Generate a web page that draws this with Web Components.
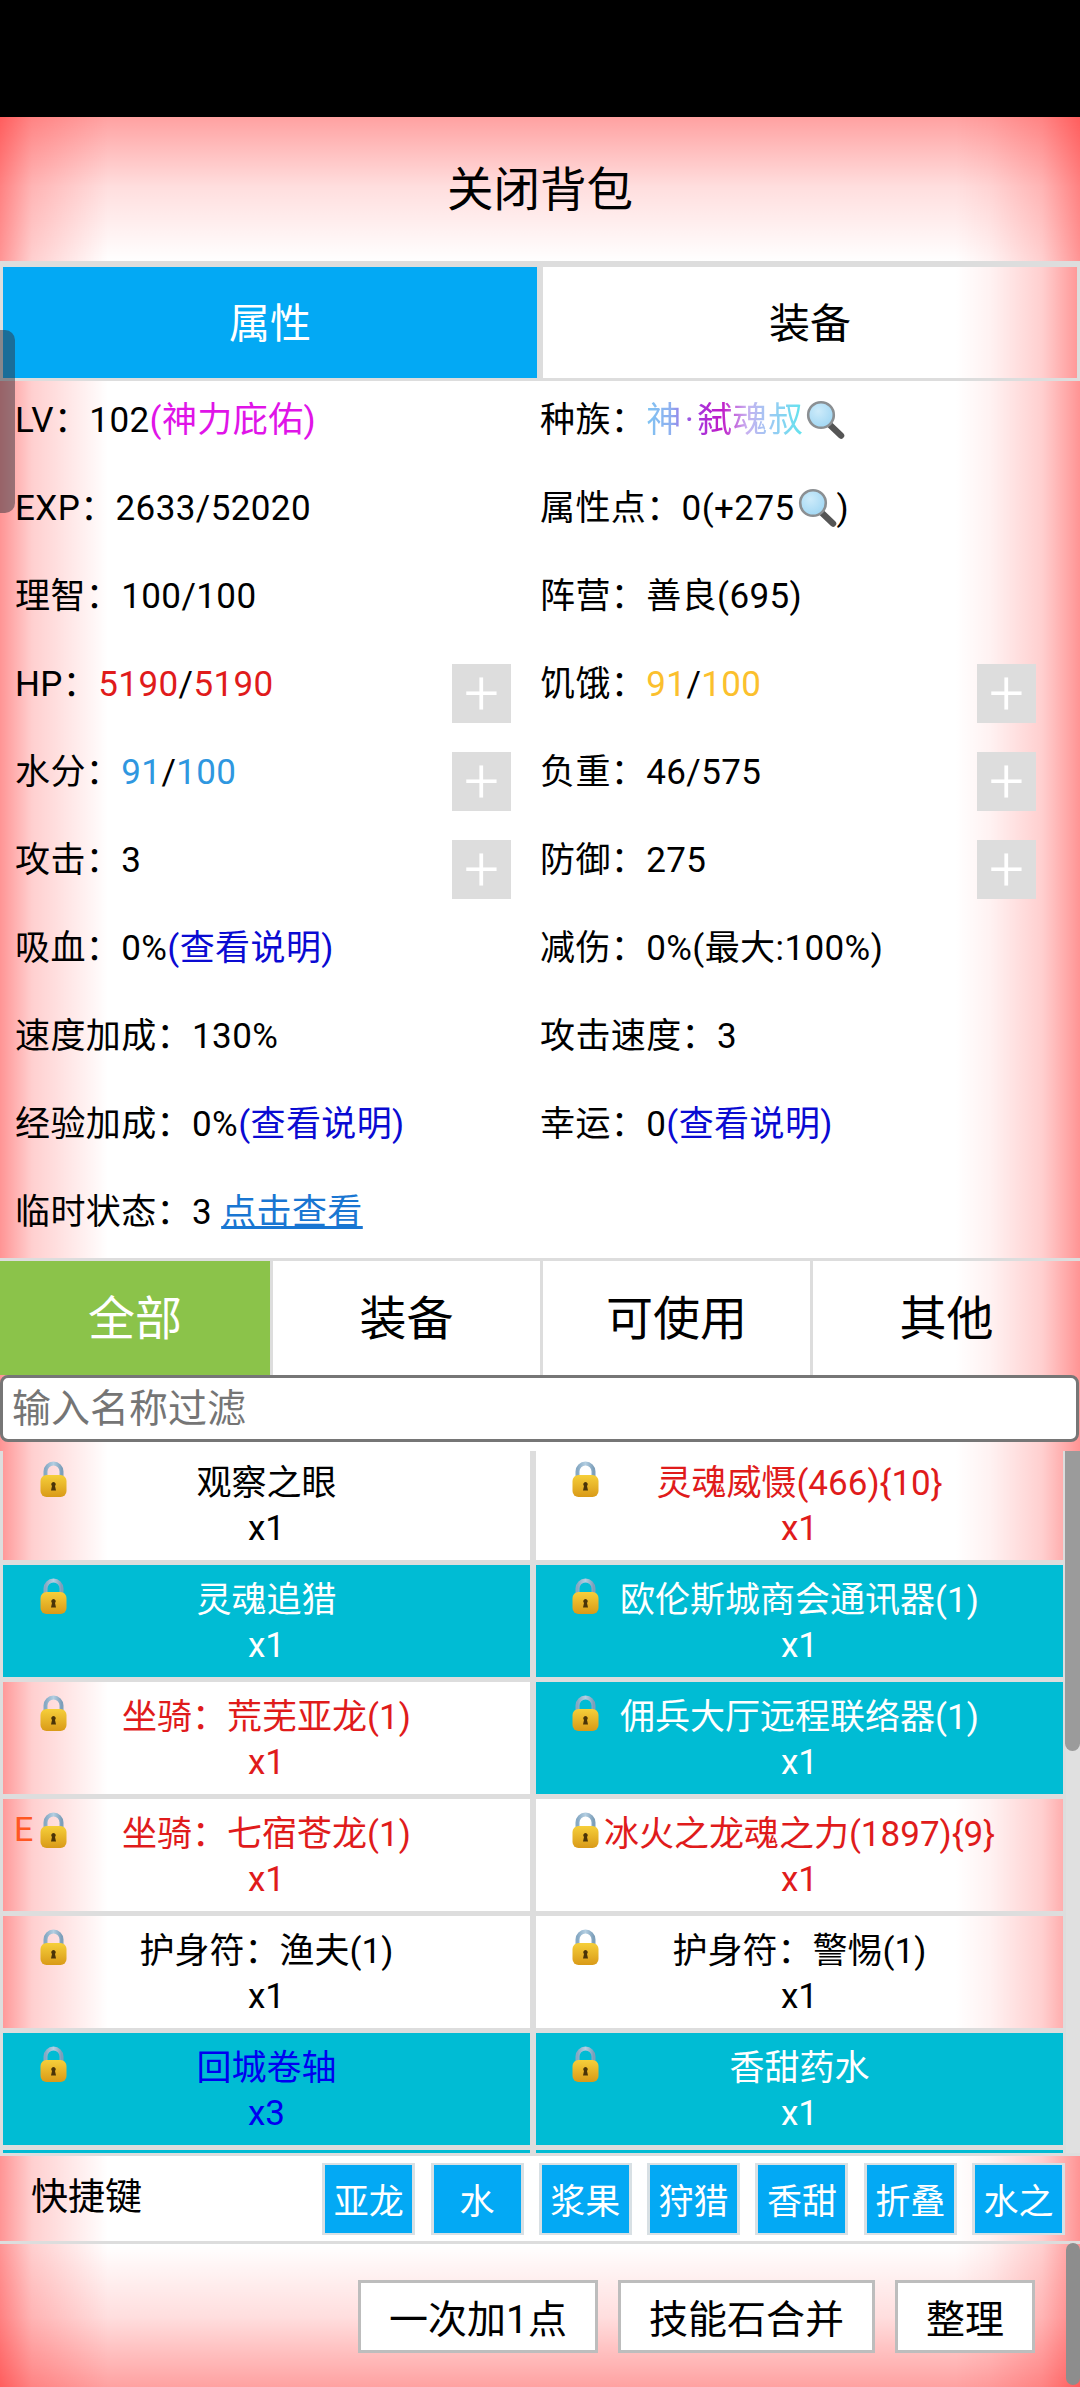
<!DOCTYPE html>
<html lang="zh-CN">
<head>
<meta charset="utf-8">
<title>背包</title>
<style>
html,body{margin:0;padding:0;background:#000}
body{width:1080px;height:2387px;overflow:hidden;font-family:Roboto,"Noto Sans CJK SC",sans-serif;color:#000}
.c{font-family:"Noto Sans CJK TC",sans-serif;line-height:0}
.mag{color:#e014e8}.red{color:#e01b1b}.sky{color:#2f97e0}.gold{color:#fbc02d}.link{color:#0a0ad2}
.ul{color:#1976d2;text-decoration:underline}
.race{background:linear-gradient(90deg,#7fc4f2 0,#8fb0f0 16%,#a040e0 30%,#c018c8 48%,#c8b0f0 64%,#a0c8f4 78%,#60e4ee 100%);-webkit-background-clip:text;background-clip:text;color:transparent}
.dot{margin:0 3px}
</style>
</head>
<body>
<x-bag>
  <x-title>关闭背包</x-title>
  <x-tabs>
    <x-tab active>属性</x-tab>
    <x-tab>装备</x-tab>
  </x-tabs>
  <x-stats>
    <x-stat>LV<span class="c">：</span>102<span class="mag">(神力庇佑)</span></x-stat>
    <x-stat>种族<span class="c">：</span><span class="race">神<span class="dot">·</span>弑魂叔</span><x-magnifier></x-magnifier></x-stat>
    <x-stat>EXP<span class="c">：</span>2633/52020</x-stat>
    <x-stat>属性点<span class="c">：</span>0(+275<x-magnifier></x-magnifier>)</x-stat>
    <x-stat>理智<span class="c">：</span>100/100</x-stat>
    <x-stat>阵营<span class="c">：</span>善良(695)</x-stat>
    <x-stat plus>HP<span class="c">：</span><span class="red">5190</span>/<span class="red">5190</span></x-stat>
    <x-stat plus>饥饿<span class="c">：</span><span class="gold">91</span>/<span class="gold">100</span></x-stat>
    <x-stat plus>水分<span class="c">：</span><span class="sky">91</span>/<span class="sky">100</span></x-stat>
    <x-stat plus>负重<span class="c">：</span>46/575</x-stat>
    <x-stat plus>攻击<span class="c">：</span>3</x-stat>
    <x-stat plus>防御<span class="c">：</span>275</x-stat>
    <x-stat>吸血<span class="c">：</span>0%<span class="link">(查看说明)</span></x-stat>
    <x-stat>减伤<span class="c">：</span>0%(最大:100%)</x-stat>
    <x-stat>速度加成<span class="c">：</span>130%</x-stat>
    <x-stat>攻击速度<span class="c">：</span>3</x-stat>
    <x-stat>经验加成<span class="c">：</span>0%<span class="link">(查看说明)</span></x-stat>
    <x-stat>幸运<span class="c">：</span>0<span class="link">(查看说明)</span></x-stat>
    <x-stat>临时状态<span class="c">：</span>3 <span class="ul">点击查看</span></x-stat>
  </x-stats>
  <x-filters>
    <x-filter active>全部</x-filter>
    <x-filter>装备</x-filter>
    <x-filter>可使用</x-filter>
    <x-filter>其他</x-filter>
  </x-filters>
  <x-search>输入名称过滤</x-search>
  <x-list>
    <x-item>观察之眼<span slot="count">x1</span></x-item>
    <x-item class="red">灵魂威慑(466){10}<span slot="count">x1</span></x-item>
    <x-item teal>灵魂追猎<span slot="count">x1</span></x-item>
    <x-item teal>欧伦斯城商会通讯器(1)<span slot="count">x1</span></x-item>
    <x-item class="red">坐骑<span class="c">：</span>荒芜亚龙(1)<span slot="count">x1</span></x-item>
    <x-item teal>佣兵大厅远程联络器(1)<span slot="count">x1</span></x-item>
    <x-item class="red" equipped>坐骑<span class="c">：</span>七宿苍龙(1)<span slot="count">x1</span></x-item>
    <x-item class="red">冰火之龙魂之力(1897){9}<span slot="count">x1</span></x-item>
    <x-item>护身符<span class="c">：</span>渔夫(1)<span slot="count">x1</span></x-item>
    <x-item>护身符<span class="c">：</span>警惕(1)<span slot="count">x1</span></x-item>
    <x-item teal style="color:#0000f0">回城卷轴<span slot="count">x3</span></x-item>
    <x-item teal>香甜药水<span slot="count">x1</span></x-item>
    <x-item teal empty></x-item>
    <x-item teal empty></x-item>
  </x-list>
  <x-quick>
    <x-key>亚龙</x-key><x-key>水</x-key><x-key>浆果</x-key><x-key>狩猎</x-key><x-key>香甜</x-key><x-key>折叠</x-key><x-key>水之</x-key>
  </x-quick>
  <x-actions>
    <x-action>一次加1点</x-action>
    <x-action>技能石合并</x-action>
    <x-action>整理</x-action>
  </x-actions>
</x-bag>
<script>
function def(name, css, html){
  customElements.define(name, class extends HTMLElement{
    constructor(){
      super();
      const r=this.attachShadow({mode:'open'});
      r.innerHTML='<style>'+css+'</style>'+html;
    }
  });
}
const LOCK='<svg viewBox="0 0 27 37" width="27" height="37" aria-hidden="true"><defs><linearGradient id="b" x1="0" y1="0" x2="0" y2="1"><stop offset="0" stop-color="#f6cf3a"/><stop offset="1" stop-color="#d99a18"/></linearGradient><linearGradient id="s" x1="0" y1="0" x2="1" y2="0"><stop offset="0" stop-color="#86a9c4"/><stop offset=".5" stop-color="#b4cfe2"/><stop offset="1" stop-color="#7d9fba"/></linearGradient></defs><path d="M5.500 19V11.500a8 8 0 0 1 16 0V19" fill="none" stroke="url(#s)" stroke-width="4"/><rect x="0.500" y="15" width="26" height="22" rx="6" fill="url(#b)"/><path d="M13.500 22a2.300 2.300 0 0 1 1.500 4l1 4.500h-5l1-4.500a2.300 2.300 0 0 1 1.500-4z" fill="#4a3408"/></svg>';
const MAG='<svg viewBox="0 0 40 40" width="40" height="40" aria-hidden="true"><defs><radialGradient id="l" cx=".4" cy=".35" r=".7"><stop offset="0" stop-color="#cdebfa"/><stop offset="1" stop-color="#9fd6f3"/></radialGradient></defs><path d="M25 25L36 35.500" stroke="#555" stroke-width="6.500" stroke-linecap="round"/><circle cx="16" cy="15" r="12.800" fill="url(#l)" stroke="#8b8f92" stroke-width="2.600"/></svg>';

def('x-bag',`:host{display:block;width:1080px;height:2387px;background:#000;position:relative;overflow:hidden}
.panel{margin-top:117px;height:2270px;display:flex;flex-direction:column;background:
linear-gradient(to right,rgba(255,0,0,.42),rgba(255,0,0,.19) 32px,rgba(255,0,0,0) 108px),
linear-gradient(to left,rgba(255,0,0,.42),rgba(255,0,0,.19) 38px,rgba(255,0,0,.05) 90px,rgba(255,0,0,0) 125px),
linear-gradient(to bottom,rgba(255,0,0,.37),rgba(255,0,0,.13) 70px,rgba(255,0,0,0) 145px),
linear-gradient(to top,rgba(255,0,0,.37),rgba(255,0,0,.13) 70px,rgba(255,0,0,0) 143px),#fff}
.tab{position:absolute;left:0;top:330px;width:15px;height:183px;background:rgba(50,50,60,.5);border-radius:0 10px 10px 0}
.bar{position:absolute;right:0;top:2243px;width:14px;height:142px;background:#8d8d8d;border-radius:7px}`,
`<div class="panel"><slot></slot></div><div class="tab"></div><div class="bar"></div>`);

def('x-title',`:host{display:flex;align-items:center;justify-content:center;box-sizing:border-box;height:144px;padding-bottom:8px;font-size:46.500px}`,`<slot></slot>`);

def('x-tabs',`:host{display:grid;grid-template-columns:1fr 1fr;border-top:3px solid #ddd}`,`<slot></slot>`);
def('x-tab',`:host{display:flex;align-items:center;justify-content:center;height:117px;box-sizing:border-box;border:3px solid #ddd;padding-bottom:5px;font-size:41px}
:host([active]){background:#03a9f4;color:#fff;background-clip:padding-box}`,`<slot></slot>`);

def('x-stats',`:host{display:grid;grid-template-columns:1fr 1fr;grid-template-rows:repeat(9,88px) 85px;padding:0 15px}`,`<slot></slot>`);
def('x-stat',`:host{display:flex;align-items:flex-start;justify-content:space-between;font-size:35px;letter-spacing:.4px}
.t{display:block;line-height:50px;padding-top:15px;white-space:nowrap}
.p{display:none;width:59px;height:59px;margin:19px 29px 0 0;background:#ddd;color:#fff;font:300 62px/57px Roboto,sans-serif;letter-spacing:0;text-align:center}
:host([plus]) .p{display:block}`,
`<span class="t"><slot></slot></span><span class="p">+</span>`);
def('x-magnifier',`:host{display:inline-block;width:40px;height:40px;vertical-align:-8px;margin-left:2px}svg{display:block}`,MAG);

def('x-filters',`:host{display:grid;grid-template-columns:repeat(4,1fr);border-top:3px solid #ddd}`,`<slot></slot>`);
def('x-filter',`:host{display:flex;align-items:center;justify-content:center;height:114px;font-size:47px;box-sizing:border-box;border-left:3px solid #ddd;padding-bottom:7px}
:host(:first-child){border-left:0}
:host([active]){background:#8bc34a;color:#fff}`,`<slot></slot>`);

def('x-search',`:host{display:flex;align-items:center;box-sizing:border-box;height:67px;margin:0 1px 9px 0;padding:0 0 7px 9px;background:#fff;border:3px solid #767676;border-radius:8px;color:#757575;font-size:39px}`,`<slot></slot>`);

def('x-list',`:host{display:block;position:relative;height:702px;overflow:hidden}
.g{display:grid;grid-template-columns:533px 533px;grid-auto-rows:117px;margin-top:-3px}
.track{position:absolute;right:0;top:0;bottom:0;width:14px;background:#e0e0e0}
.thumb{position:absolute;right:0;top:0;width:15px;height:300px;background:#9b9b9b;border-radius:0 0 8px 8px}`,
`<div class="g"><slot></slot></div><div class="track"></div><div class="thumb"></div>`);
def('x-item',`:host{display:block;position:relative;box-sizing:border-box;border-style:solid;border-color:#ddd;border-width:0 3px 5px 3px;font-size:35px;line-height:45px;text-align:center;padding-top:13px;white-space:nowrap}
:host([teal]){background:#00bcd4;background-clip:padding-box;color:#fff}
.lock{position:absolute;left:37px;top:12px;width:27px;height:37px;display:block}
:host(:nth-child(even)) .lock{left:36px}
svg{display:block}
.e{display:none;position:absolute;left:11px;top:8px;color:#ff5722;font-size:34px;line-height:45px}
:host([equipped]) .e{display:block}
:host([empty]) .lock{display:none}
.count{display:block}`,
`<span class="e">E</span><span class="lock">${LOCK}</span><div><slot></slot></div><div class="count"><slot name="count"></slot></div>`);

def('x-quick',`:host{display:flex;align-items:center;height:85px;border-top:3px solid #ddd;border-bottom:3px solid #ddd;padding-right:15px;gap:15.300px}
.l{margin-left:31px;margin-right:auto;font-size:37px;position:relative;top:-5px}`,`<span class="l">快捷键</span><slot></slot>`);
def('x-key',`:host{display:flex;align-items:center;justify-content:center;box-sizing:border-box;width:93px;height:72px;border:solid #d8e0e4;border-width:2px 3px;background:#03a9f4;background-clip:padding-box;color:#fff;font-size:35px}`,`<slot></slot>`);

def('x-actions',`:host{display:flex;justify-content:flex-end;align-items:flex-start;gap:20px;flex:1;padding:36px 45px 0 0}`,`<slot></slot>`);
def('x-action',`:host{display:flex;align-items:center;justify-content:center;box-sizing:border-box;height:73px;padding:0 28px 2px;background:#fff;border:3px solid #bdbdbd;font-size:39px}`,`<slot></slot>`);
</script>
</body>
</html>
